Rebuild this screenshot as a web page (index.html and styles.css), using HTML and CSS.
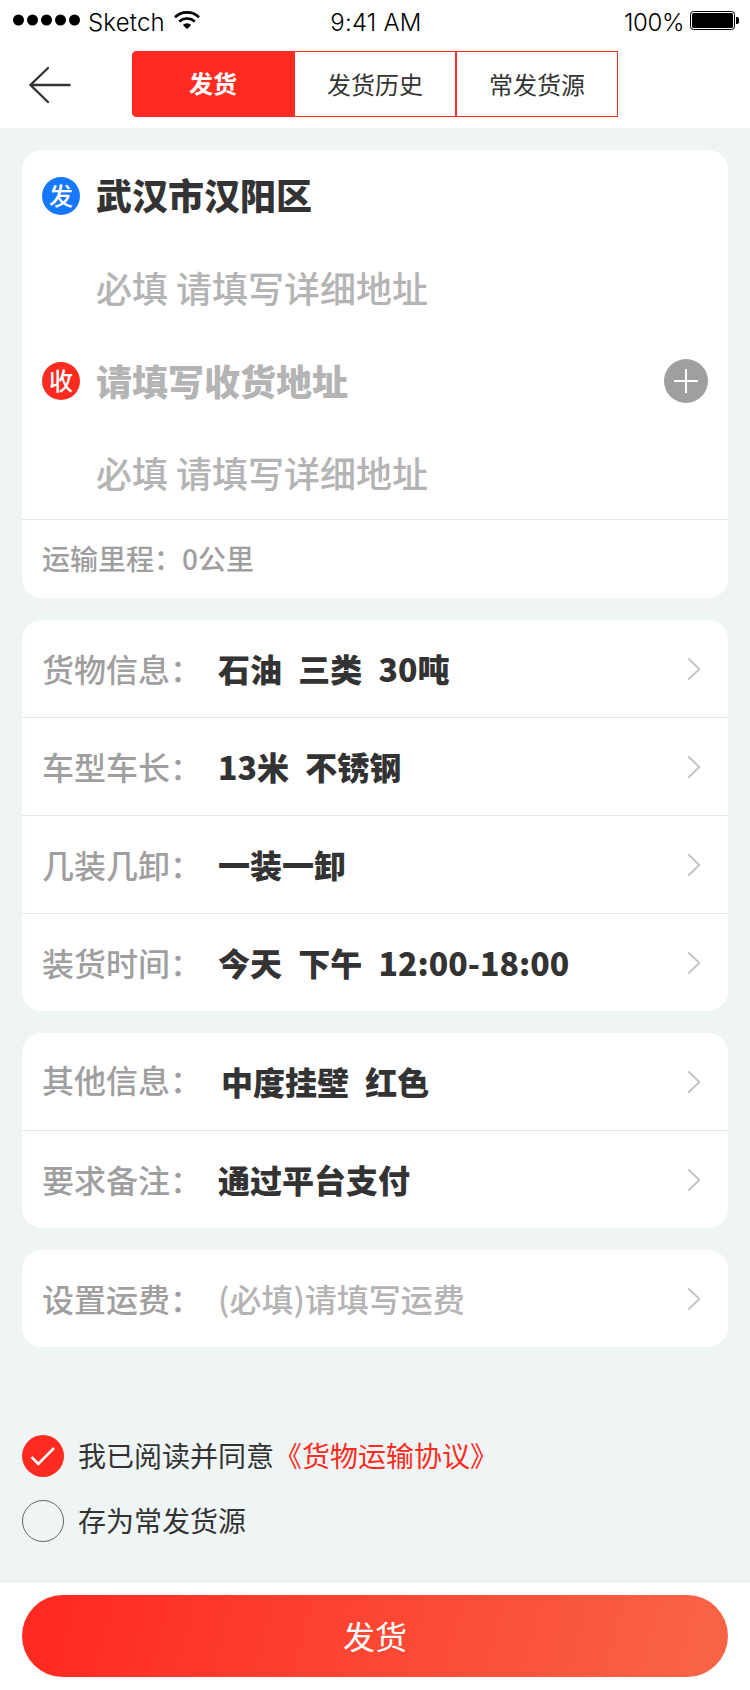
FILE: index.html
```html
<!DOCTYPE html>
<html lang="zh-CN">
<head>
  <meta charset="UTF-8">
  <title>发货</title>
  <meta name="viewport" content="width=device-width, initial-scale=1.0">
  <link rel="stylesheet" href="styles.css">
</head>
<body>
  <svg class="sprite" width="0" height="0">
    <symbol id="chevron" viewBox="0 0 14 24">
      <path d="M1.9 2 L12.3 12 L1.9 22" fill="none" stroke="#c4c4c4" stroke-width="1.9" stroke-linecap="round" stroke-linejoin="round"/>
    </symbol>
  </svg>

  <!-- STATUS BAR -->
  <div class="status-bar">
    <div class="status-left">
      <svg class="signal" width="68" height="12" viewBox="0 0 68 12">
        <circle cx="5.5" cy="6" r="5.5"/>
        <circle cx="19.5" cy="6" r="5.5"/>
        <circle cx="33.5" cy="6" r="5.5"/>
        <circle cx="47.5" cy="6" r="5.5"/>
        <circle cx="61.5" cy="6" r="5.5"/>
      </svg>
      <span class="carrier">Sketch</span>
      <svg class="wifi" width="26" height="18" viewBox="0 0 26 18">
        <path d="M1 6.2 A17.5 17.5 0 0 1 25 6.2" fill="none" stroke="#000" stroke-width="2.8"/>
        <path d="M5.2 10.6 A11.4 11.4 0 0 1 20.8 10.6" fill="none" stroke="#000" stroke-width="2.6"/>
        <path d="M13 18 L8.8 13.9 A6.2 6.2 0 0 1 17.2 13.9 Z"/>
      </svg>
    </div>
    <span class="time">9:41 AM</span>
    <div class="status-right">
      <span class="percent">100%</span>
      <svg width="49" height="19" viewBox="0 0 49 19">
        <rect x="0.5" y="0.5" width="44" height="18" rx="3" fill="none" stroke="#000"/>
        <rect x="2" y="2" width="41" height="15" rx="1.5"/>
        <path d="M46 6 h1 q2 0 2 2 v3 q0 2 -2 2 h-1 z"/>
      </svg>
    </div>
  </div>

  <!-- HEADER -->
  <header class="header">
    <a href="#" class="back">
      <svg width="44" height="38" viewBox="0 0 44 38">
        <path d="M20 2 L2.4 19 L20 36 M2.4 19 H41.5" fill="none" stroke="#333" stroke-width="2.4" stroke-linecap="round" stroke-linejoin="round"/>
      </svg>
    </a>
    <nav class="tabs">
      <a href="#" class="tab active">发货</a>
      <a href="#" class="tab">发货历史</a>
      <a href="#" class="tab">常发货源</a>
    </nav>
  </header>

  <main class="content">
    <!-- ADDRESS -->
    <section class="card">
      <div class="address">
        <div class="address-row">
          <span class="badge send">发</span>
          <span class="city">武汉市汉阳区</span>
        </div>
        <div class="address-row detail">必填 请填写详细地址</div>
        <div class="address-row">
          <span class="badge receive">收</span>
          <span class="city empty">请填写收货地址</span>
          <svg class="add" width="44" height="44" viewBox="0 0 44 44">
            <circle cx="22" cy="22" r="22" fill="#9f9f9f"/>
            <path d="M22 10 V34 M10 22 H34" stroke="#fff" stroke-width="2"/>
          </svg>
        </div>
        <div class="address-row detail">必填 请填写详细地址</div>
      </div>
      <div class="mileage">运输里程：0公里</div>
    </section>

    <!-- CARGO -->
    <section class="card">
      <div class="row">
        <span class="label">货物信息：</span>
        <span class="value">石油  三类  30吨</span>
        <svg class="arrow"><use href="#chevron"/></svg>
      </div>
      <div class="row">
        <span class="label">车型车长：</span>
        <span class="value">13米  不锈钢</span>
        <svg class="arrow"><use href="#chevron"/></svg>
      </div>
      <div class="row">
        <span class="label">几装几卸：</span>
        <span class="value">一装一卸</span>
        <svg class="arrow"><use href="#chevron"/></svg>
      </div>
      <div class="row">
        <span class="label">装货时间：</span>
        <span class="value">今天  下午  12:00-18:00</span>
        <svg class="arrow"><use href="#chevron"/></svg>
      </div>
    </section>

    <!-- OTHER -->
    <section class="card">
      <div class="row other">
        <span class="label">其他信息：</span>
        <span class="value">中度挂壁  红色</span>
        <svg class="arrow"><use href="#chevron"/></svg>
      </div>
      <div class="row">
        <span class="label">要求备注：</span>
        <span class="value">通过平台支付</span>
        <svg class="arrow"><use href="#chevron"/></svg>
      </div>
    </section>

    <!-- FREIGHT -->
    <section class="card">
      <div class="row">
        <span class="label">设置运费：</span>
        <span class="value placeholder">(必填)请填写运费</span>
        <svg class="arrow"><use href="#chevron"/></svg>
      </div>
    </section>

    <div class="options">
      <div class="option">
        <svg width="42" height="42" viewBox="0 0 42 42">
          <circle cx="21" cy="21" r="21" fill="#ff2b21"/>
          <path d="M9.5 22 L16.3 28.8 L32 13" fill="none" stroke="#fff" stroke-width="2.6"/>
        </svg>
        <span>我已阅读并同意<a href="#">《货物运输协议》</a></span>
      </div>
      <div class="option">
        <svg width="42" height="42" viewBox="0 0 42 42">
          <circle cx="21" cy="21" r="20.5" fill="none" stroke="#666"/>
        </svg>
        <span>存为常发货源</span>
      </div>
    </div>
  </main>

  <footer class="footer">
    <button class="submit">发货</button>
  </footer>
</body>
</html>
```

FILE: styles.css
```css
* {
  box-sizing: border-box;
}
body {
  margin: 0;
  width: 750px;
  height: 1690px;
  display: flex;
  flex-direction: column;
  background: #eff5f5;
  font-family: "Noto Sans CJK SC", sans-serif;
  font-weight: 500;
  color: #333;
}
a {
  text-decoration: none;
  color: inherit;
}
.sprite {
  position: absolute;
}

/* status bar */
.status-bar {
  height: 40px;
  padding: 6px 11px 0 13px;
  display: grid;
  grid-template-columns: 1fr auto 1fr;
  align-items: center;
  background: #fff;
  font-family: Inter, sans-serif;
  font-size: 24px;
  font-weight: 350;
  line-height: 34px;
  color: #000;
}
.status-left,
.status-right {
  display: flex;
  align-items: center;
}
.status-right {
  justify-content: flex-end;
  gap: 6px;
}
.status-right svg,
.wifi,
.signal {
  margin-bottom: 6px;
}
.carrier {
  margin: 0 9px 0 7px;
  letter-spacing: 0.2px;
}
.time {
  letter-spacing: 0.2px;
}
.percent {
  letter-spacing: -0.4px;
}

/* header */
.header {
  height: 88px;
  padding: 11px 0 0 28px;
  display: flex;
  align-items: flex-start;
  background: #fff;
}
.back {
  width: 104px;
  height: 66px;
  padding-top: 15px;
}
.back svg {
  display: block;
}
.tabs {
  display: flex;
}
.tab {
  width: 162px;
  height: 66px;
  border: 1px solid #ff2b21;
  text-align: center;
  font-size: 24px;
  font-weight: 400;
  line-height: 64px;
}
.tab.active {
  background: #ff2b21;
  border-radius: 4px 0 0 4px;
  color: #fff;
  font-weight: bold;
  line-height: 62px;
}

/* cards */
.content {
  flex: 1;
  padding: 22px 22px 0;
}
.card {
  margin-bottom: 22px;
  border-radius: 20px;
  background: #fff;
}
.address {
  height: 369px;
  padding: 0 20px;
  display: grid;
  grid-template-rows: repeat(4, 1fr);
}
.address-row {
  display: flex;
  align-items: center;
  font-size: 36px;
}
.badge {
  width: 38px;
  height: 38px;
  margin-right: 16px;
  border-radius: 50%;
  color: #fff;
  font-size: 24px;
  line-height: 36px;
  text-align: center;
}
.send {
  background: #1677ff;
}
.receive {
  background: #ff2b21;
}
.city {
  padding-bottom: 4px;
  font-weight: 900;
}
.city.empty {
  padding-bottom: 1px;
}
.empty,
.detail {
  color: #b4b4b4;
}
.detail {
  padding: 0 0 2px 54px;
}
.add {
  margin-left: auto;
}
.mileage {
  height: 79px;
  padding: 0 20px;
  border-top: 1px solid #e6e6e6;
  color: #9f9f9f;
  font-size: 28px;
  line-height: 76px;
}
.row {
  display: flex;
  align-items: center;
  height: 97px;
  padding: 0 27px 0 20px;
  font-size: 32px;
}
.row + .row {
  height: 98px;
  border-top: 1px solid #e6e6e6;
}
.label {
  width: 176px;
  padding-bottom: 2px;
  color: #9f9f9f;
}
.value {
  flex: 1;
  padding-bottom: 2px;
  font-weight: 900;
  white-space: pre;
  word-spacing: 0.8px;
}
.placeholder {
  color: #b4b4b4;
  font-weight: 500;
}
.other .label {
  width: 179px;
  padding-bottom: 5px;
}
.arrow {
  width: 14px;
  height: 24px;
}

/* options */
.options {
  padding-top: 66px;
  font-size: 28px;
  font-weight: 400;
}
.option {
  display: flex;
  align-items: center;
  gap: 14px;
  height: 42px;
  margin-bottom: 23px;
}
.option span {
  padding-bottom: 2px;
}
.option a {
  color: #ff2b21;
}

/* footer */
.footer {
  height: 109px;
  padding: 13px 22px 0;
  border-top: 1px solid #e3e8e8;
  background: #fff;
}
.submit {
  display: block;
  width: 100%;
  height: 82px;
  padding: 0 0 2px;
  border: none;
  border-radius: 41px;
  background: linear-gradient(105deg, #ff2a20 5%, #f96345 95%);
  color: #fff;
  font-family: inherit;
  font-size: 32px;
  font-weight: 400;
}
```
